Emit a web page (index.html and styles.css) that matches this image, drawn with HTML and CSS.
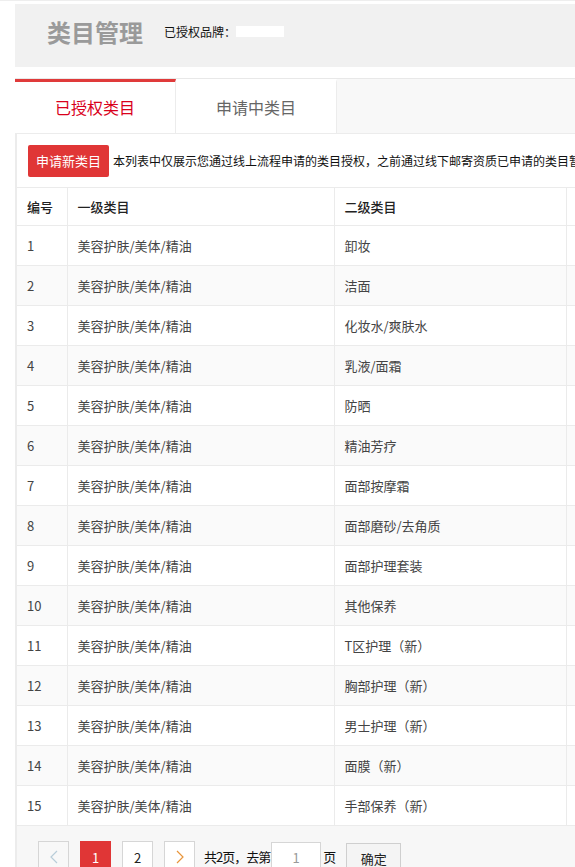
FILE: index.html
```html
<!DOCTYPE html>
<html lang="zh-CN">
<head>
<meta charset="utf-8">
<title>类目管理</title>
<link rel="stylesheet" href="styles.css">
</head>
<body>
<div class="page">
  <div class="head">
    <h1 class="title">类目管理</h1>
    <span class="brand">已授权品牌：</span>
    <span class="brand-mask"></span>
  </div>
  <div class="tabs">
    <div class="tab active">已授权类目</div>
    <div class="tab">申请中类目</div>
  </div>
  <div class="panel">
    <div class="toolbar">
      <button class="btn-primary">申请新类目</button>
      <span class="note">本列表中仅展示您通过线上流程申请的类目授权，之前通过线下邮寄资质已申请的类目暂不在此展示</span>
    </div>
    <table class="grid">
      <colgroup>
        <col class="c1"><col class="c2"><col class="c3"><col class="c4">
      </colgroup>
      <thead>
        <tr><th>编号</th><th>一级类目</th><th>二级类目</th><th></th></tr>
      </thead>
      <tbody>
        <tr><td>1</td><td>美容护肤/美体/精油</td><td>卸妆</td><td></td></tr>
        <tr><td>2</td><td>美容护肤/美体/精油</td><td>洁面</td><td></td></tr>
        <tr><td>3</td><td>美容护肤/美体/精油</td><td>化妆水/爽肤水</td><td></td></tr>
        <tr><td>4</td><td>美容护肤/美体/精油</td><td>乳液/面霜</td><td></td></tr>
        <tr><td>5</td><td>美容护肤/美体/精油</td><td>防晒</td><td></td></tr>
        <tr><td>6</td><td>美容护肤/美体/精油</td><td>精油芳疗</td><td></td></tr>
        <tr><td>7</td><td>美容护肤/美体/精油</td><td>面部按摩霜</td><td></td></tr>
        <tr><td>8</td><td>美容护肤/美体/精油</td><td>面部磨砂/去角质</td><td></td></tr>
        <tr><td>9</td><td>美容护肤/美体/精油</td><td>面部护理套装</td><td></td></tr>
        <tr><td>10</td><td>美容护肤/美体/精油</td><td>其他保养</td><td></td></tr>
        <tr><td>11</td><td>美容护肤/美体/精油</td><td>T区护理（新）</td><td></td></tr>
        <tr><td>12</td><td>美容护肤/美体/精油</td><td>胸部护理（新）</td><td></td></tr>
        <tr><td>13</td><td>美容护肤/美体/精油</td><td>男士护理（新）</td><td></td></tr>
        <tr><td>14</td><td>美容护肤/美体/精油</td><td>面膜（新）</td><td></td></tr>
        <tr><td>15</td><td>美容护肤/美体/精油</td><td>手部保养（新）</td><td></td></tr>
      </tbody>
    </table>
    <div class="pager">
      <span class="pg pg-prev"><svg width="8" height="14" viewBox="0 0 8 14"><path d="M7 1 L1 7 L7 13" fill="none" stroke="#b9cdd9" stroke-width="1.2"/></svg></span>
      <span class="pg pg-cur">1</span>
      <span class="pg">2</span>
      <span class="pg pg-next"><svg width="8" height="14" viewBox="0 0 8 14"><path d="M1 1 L7 7 L1 13" fill="none" stroke="#e8953a" stroke-width="1.2"/></svg></span>
      <span class="pg-text">共2页，去第</span>
      <span class="pg-input">1</span>
      <span class="pg-text">页</span>
      <span class="pg-ok">确定</span>
    </div>
  </div>
</div>
</body>
</html>
```

FILE: styles.css
```css
html, body {
  margin: 0;
  padding: 0;
  overflow: hidden;
  background: #fff;
}
body {
  font-family: "Noto Sans CJK SC", "Microsoft YaHei", "Noto Sans", sans-serif;
  color: #333;
  font-size: 13px;
  border-top: 1px solid #eeeeee;
}
.page {
  width: 900px;
  padding: 3px 0 0 15px;
}
.head {
  height: 63px;
  box-sizing: border-box;
  padding: 0 0 8px 32px;
  background: #f1f1f1;
  display: flex;
  align-items: center;
}
.title {
  margin: 0;
  font-size: 24px;
  font-weight: bold;
  color: #9a9a9a;
  line-height: 30px;
}
.brand {
  margin-left: 21px;
  font-size: 12px;
  color: #111;
  line-height: 16px;
}
.brand-mask {
  display: inline-block;
  width: 48px;
  height: 11px;
  background: #fff;
  margin-left: 0;
}
.tabs {
  margin-top: 11px;
  height: 54px;
  border-top: 1px solid #e8e8e8;
  border-bottom: 1px solid #ececec;
  background: #f8f8f8;
  display: flex;
  box-shadow: inset 2px 0 0 #eeeeee;
}
.tab {
  width: 161px;
  background: #fff;
  border-right: 1px solid #ececec;
  display: flex;
  align-items: center;
  justify-content: center;
  font-size: 16px;
  color: #666;
  border-top: 3px solid transparent;
  box-sizing: border-box;
  padding-bottom: 2px;
}
.tab.active {
  color: #d9001b;
  border-top-color: #e03a3a;
}
.panel {
  border-left: 2px solid #ececec;
  background: #fff;
}
.toolbar {
  height: 53px;
  display: flex;
  align-items: center;
  padding-left: 11px;
  white-space: nowrap;
}
.btn-primary {
  width: 81px;
  height: 32px;
  border: 0;
  border-radius: 2px;
  background: #e03636;
  color: #fff;
  font-family: inherit;
  font-size: 13px;
  padding: 0;
  margin: 0;
}
.note {
  margin-left: 4px;
  font-size: 12px;
  color: #111;
}
.grid {
  border-collapse: collapse;
  table-layout: fixed;
  width: 883px;
  font-size: 13px;
}
.c1 { width: 50px; }
.c2 { width: 267px; }
.c3 { width: 232px; }
.grid th, .grid td {
  border: 1px solid #ebebeb;
  text-align: left;
  padding: 0 10px;
  white-space: nowrap;
}
.grid tr > :first-child { border-left: 0; }
.grid th {
  height: 37px;
  font-weight: 500;
  color: #222;
}
.grid td {
  height: 39px;
  color: #444;
}
.grid tbody tr:nth-child(even) td {
  background: #fafafa;
}
.pager {
  background: #f7f7f7;
  height: 60px;
  display: flex;
  align-items: flex-start;
  padding: 15px 0 0 21px;
  box-sizing: border-box;
}
.pg {
  width: 31px;
  height: 32px;
  box-sizing: border-box;
  border: 1px solid #d6d6d6;
  background: #fff;
  display: flex;
  align-items: center;
  justify-content: center;
  margin-right: 11px;
  font-size: 13px;
  color: #222;
}
.pg-prev {
  background: #f8f8f8;
}
.pg-cur {
  background: #e03636;
  border-color: #e03636;
  color: #fff;
}
.pg-next {
  margin-right: 9px;
}
.pg-text {
  line-height: 32px;
  font-size: 13px;
  color: #111;
  letter-spacing: -1px;
}
.pg-input {
  width: 50px;
  height: 32px;
  box-sizing: border-box;
  border: 1px solid #d6d6d6;
  border-bottom: 0;
  background: #fff;
  margin: 1px 2px 0 1px;
  text-align: center;
  line-height: 30px;
  color: #999;
}
.pg-ok {
  margin-left: 11px;
  margin-top: 2px;
  width: 55px;
  height: 30px;
  box-sizing: border-box;
  border: 1px solid #cfcfcf;
  background: #f4f4f4;
  text-align: center;
  line-height: 30px;
  color: #222;
}
```
